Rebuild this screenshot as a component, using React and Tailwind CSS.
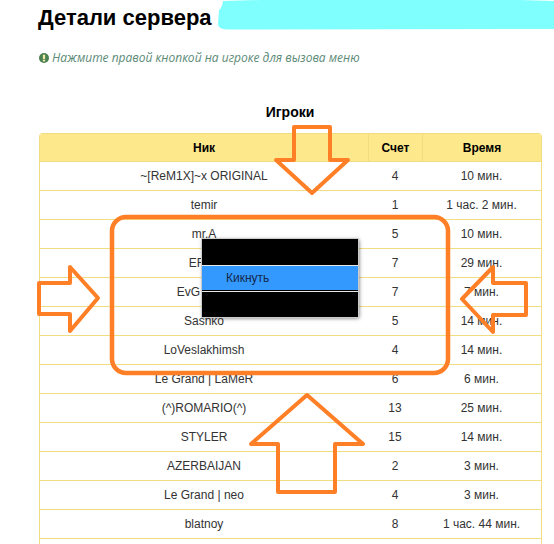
const players = [
  ['~[ReM1X]~x ORIGINAL', 4, '10 мин.', ''],
  ['temir', 1, '1 час. 2 мин.', ''],
  ['mr.A', 5, '10 мин.', ''],
  ['EF', 7, '29 мин.', 'pr-[15px]'],
  ['EvG', 7, '7 мин.', 'pr-[31px]'],
  ['Sasnko', 5, '14 мин.', ''],
  ['LoVeslakhimsh', 4, '14 мин.', ''],
  ['Le Grand | LaMeR', 6, '6 мин.', ''],
  ['(^)ROMARIO(^)', 13, '25 мин.', ''],
  ['STYLER', 15, '14 мин.', ''],
  ['AZERBAIJAN', 2, '3 мин.', ''],
  ['Le Grand | neo', 4, '3 мин.', ''],
  ['blatnoy', 8, '1 час. 44 мин.', ''],
];

function Annotations() {
  return (
    <svg className="absolute left-0 top-0" width="554" height="544" fill="none" stroke="#ff7f27" strokeWidth="4" strokeLinejoin="round">
      <rect x="112" y="217" width="336" height="156" rx="14" strokeWidth="4.5" />
      <path d="M39 283H70V267L98 298L70 331V314H39Z" />
      <path d="M462 299L493 267V283H526V315H493V332Z" />
      <path d="M294 127H330V160H348L312 193L276 160H294Z" />
      <path d="M307 395L363 444H335V492H278V444H251Z" />
    </svg>
  );
}

function ContextMenu() {
  return (
    <div className="absolute left-[202px] top-[239px] flex h-[78px] w-[156px] flex-col bg-black shadow-[1px_1px_4px_rgba(0,0,0,0.6)] outline outline-1 outline-[#cccccc]">
      <div className="h-[26px]" />
      <div className="h-px bg-[#e8e8e8]" />
      <div className="flex h-[24px] items-center bg-[#3399ff] pl-[24px] text-[12px] text-[#14284b]">Кикнуть</div>
      <div className="h-px bg-black" />
      <div className="h-px bg-[#e8e8e8]" />
      <div className="flex-1" />
    </div>
  );
}

export default function App() {
  return (
    <div className="relative h-[544px] w-[554px] overflow-hidden bg-white font-['Liberation_Sans',sans-serif] text-[#333333]">
      <svg className="absolute left-0 top-0" width="554" height="40" fill="#80ffff">
        <path d="M223 1L260 0L520 0L554 1V29L227 29.5Q218 29 218 24L219 10Q222 8 223 1Z" />
      </svg>

      <div className="relative pl-[38px] pr-[12px] pt-[3px]">
        <h1 className="h-[46px] text-[22px] font-bold leading-[29px] text-black">Детали сервера</h1>

        <p className="flex h-[18px] items-center gap-[3px] pl-px font-['Open_Sans',sans-serif] text-[12px] italic text-[#5b8a76]">
          <svg width="10" height="10" viewBox="0 0 13 13" className="shrink-0">
            <circle cx="6.5" cy="6.5" r="6.5" fill="#4a7f4f" />
            <rect x="5" y="2.2" width="3" height="5.5" fill="#f0e9a8" />
            <rect x="5" y="8.6" width="3" height="2.4" fill="#f0e9a8" />
          </svg>
          Нажмите правой кнопкой на игроке для вызова меню
        </p>

        <h2 className="mt-[37px] h-[29px] text-center text-[14px] font-bold leading-[17px] text-black">Игроки</h2>

        <table className="ml-px w-[503px] table-fixed border-separate border-spacing-0 overflow-hidden rounded-t-[4px] border-l border-r border-[#f0dc82] text-[12px]">
          <thead>
            <tr className="h-[29px] bg-[#fde98b] font-bold text-black">
              <th className="w-[328px] border-b border-t border-[#f0dc82]">Ник</th>
              <th className="w-[54px] border-b border-l border-t border-[#f0dc82]">Счет</th>
              <th className="border-b border-l border-t border-[#f0dc82]">Время</th>
            </tr>
          </thead>
          <tbody>
            {players.map((p) => (
              <tr key={p[0]} className="h-[29px] text-center">
                <td className={`border-b border-[#f0dc82] ${p[3]}`}>{p[0]}</td>
                <td className="border-b border-[#f0dc82]">{p[1]}</td>
                <td className="border-b border-[#f0dc82]">{p[2]}</td>
              </tr>
            ))}
            <tr className="h-[29px]"><td colSpan="3" /></tr>
          </tbody>
        </table>
      </div>

      <ContextMenu />
      <Annotations />
    </div>
  );
}
